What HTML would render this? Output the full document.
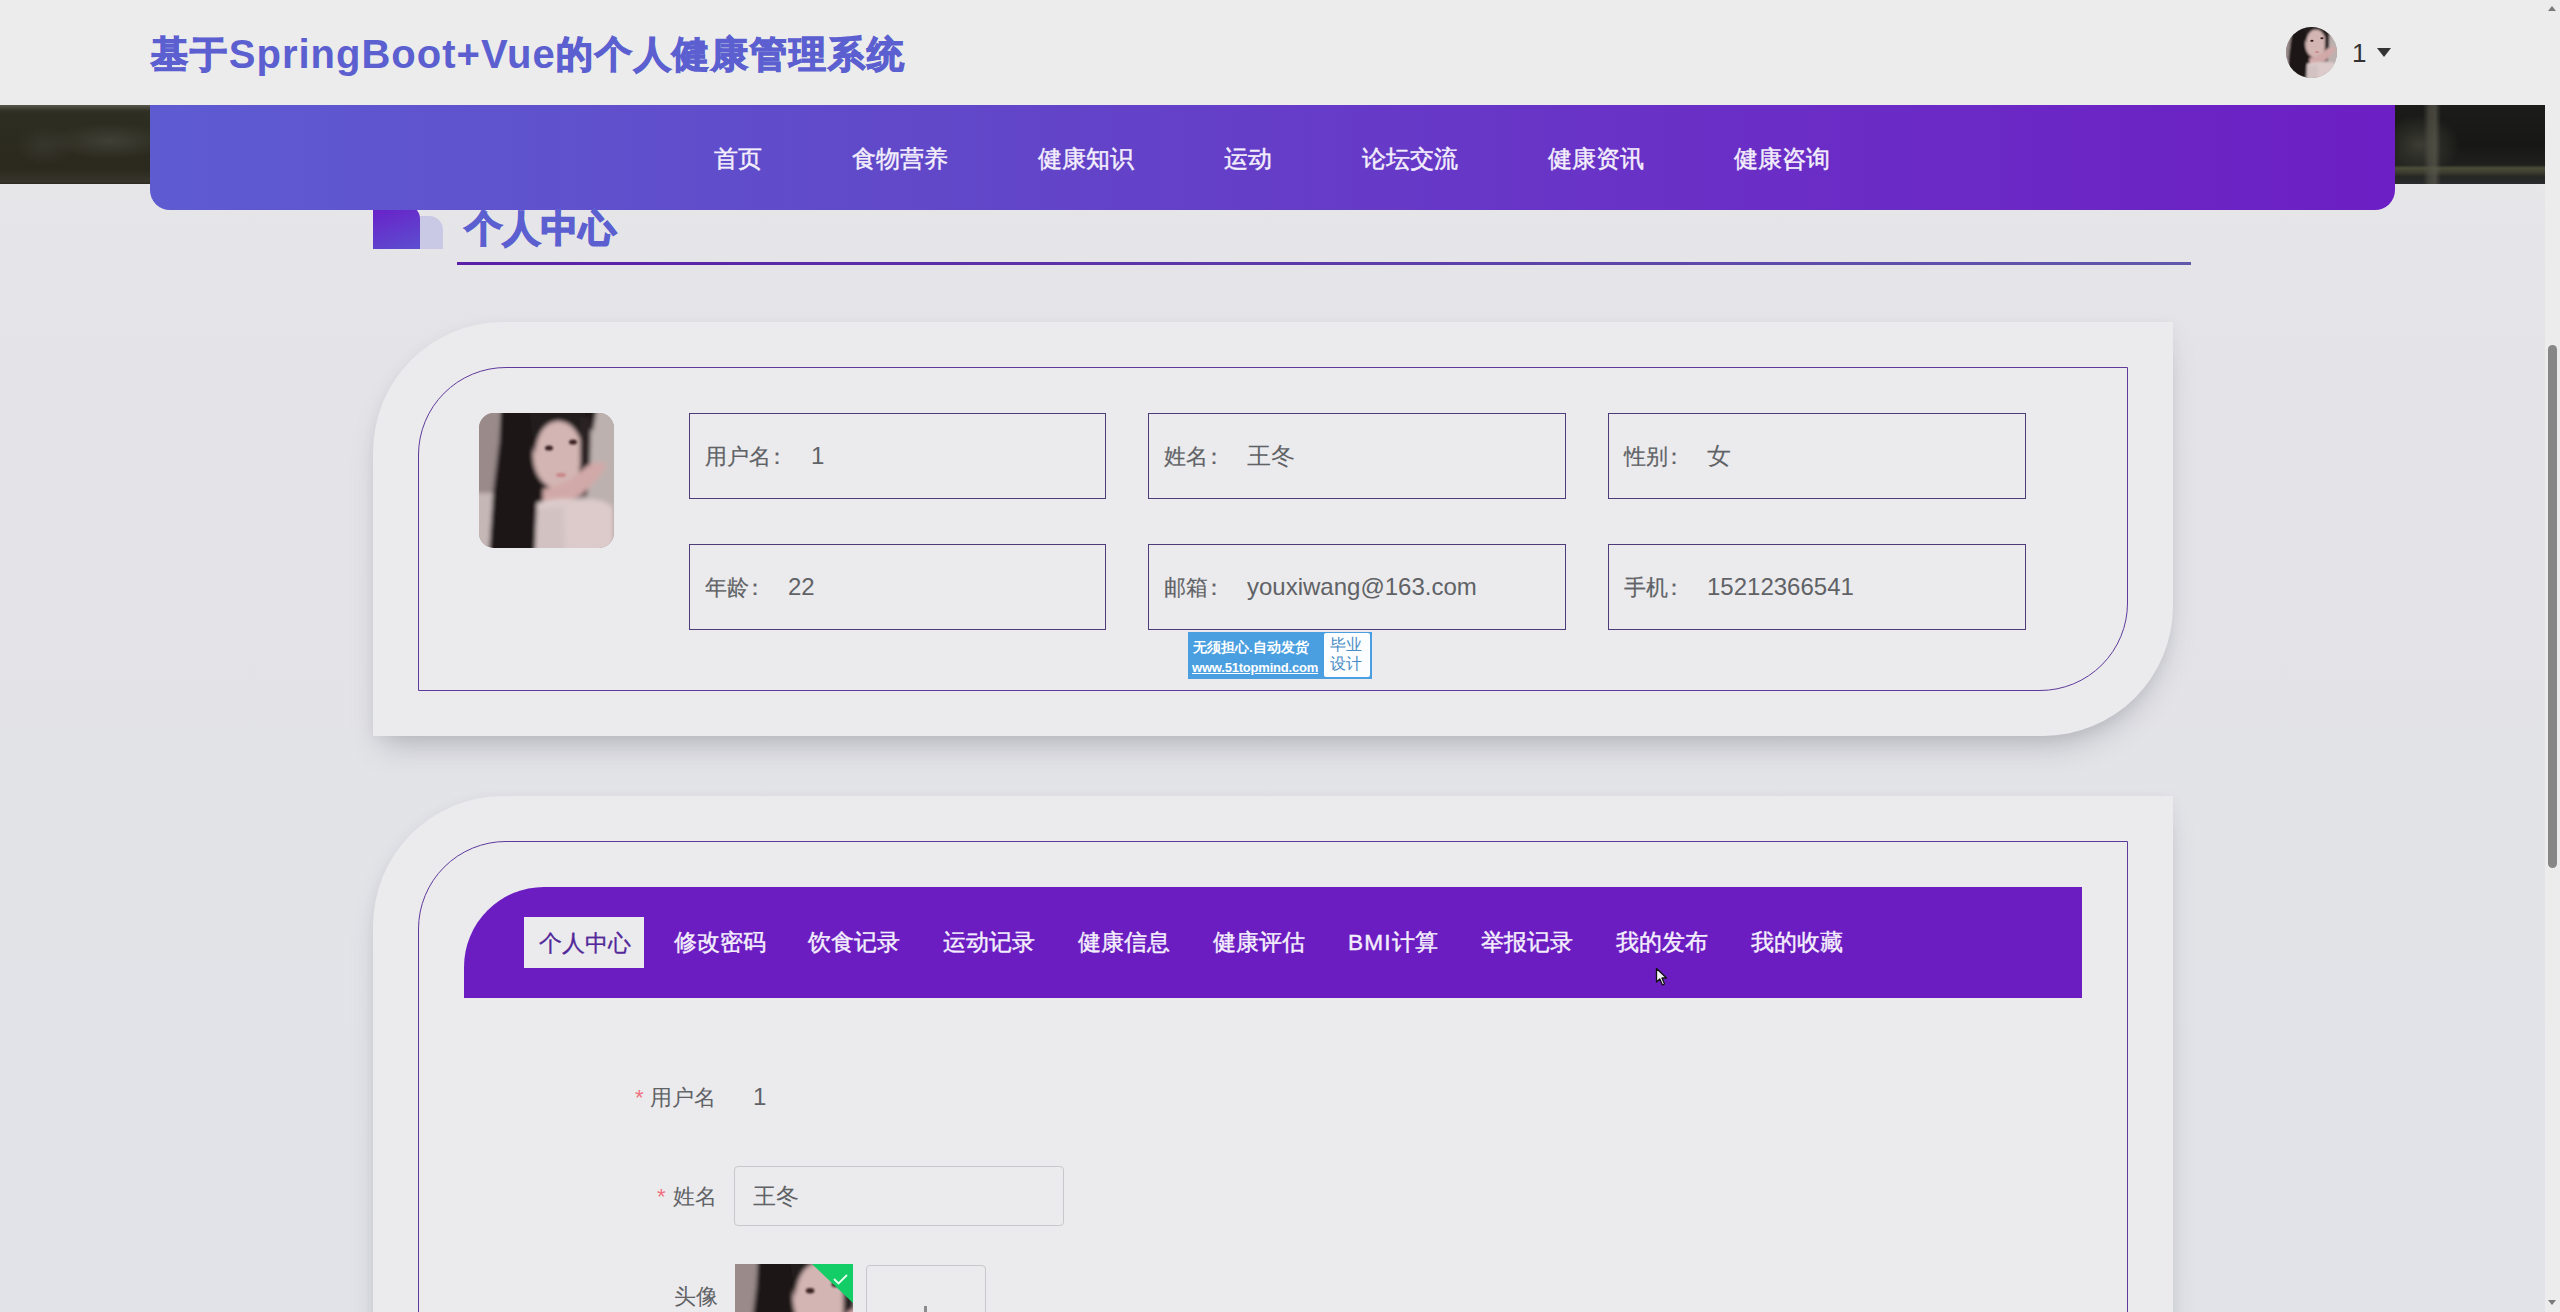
<!DOCTYPE html>
<html><head><meta charset="utf-8">
<style>
*{margin:0;padding:0;box-sizing:border-box}
html,body{width:2560px;height:1312px;overflow:hidden}
body{position:relative;font-family:"Liberation Sans",sans-serif;background:linear-gradient(180deg,#ececec 0,#ececec 105px,#e6e6e9 190px,#e3e3e8 400px,#e2e3e8 1312px);}
.abs{position:absolute}
#title .cj{font-size:37px;letter-spacing:1.9px;-webkit-text-stroke:1.3px #5b5fd0;vertical-align:1px}
#title .lt{font-size:40px;letter-spacing:1.0px}
#hdr{left:0;top:0;width:2545px;height:105px;background:#ececec}
#title{left:151px;top:28px;font-size:40px;font-weight:bold;color:#5b5fd0;white-space:nowrap;line-height:52px}
#banner{left:0;top:105px;width:2545px;height:79px;background:#2b2a20}
#bnl{left:0;top:105px;width:150px;height:79px;background:
 linear-gradient(180deg,rgba(120,120,110,.55) 0,rgba(60,60,50,.2) 6px,rgba(0,0,0,0) 10px),
 radial-gradient(ellipse 60px 18px at 110px 36px,rgba(70,70,62,.75),rgba(0,0,0,0)),
 radial-gradient(ellipse 30px 20px at 45px 40px,rgba(62,62,55,.6),rgba(0,0,0,0)),
 linear-gradient(180deg,#2f2e22 0,#2c2b1f 45%,#2b291e 80%,#37352b 97%,#2a2920 100%)}
#bnr{left:2395px;top:105px;width:150px;height:79px;background:
 linear-gradient(90deg,rgba(0,0,0,0) 28px,rgba(80,80,70,.7) 34px,rgba(90,90,78,.7) 40px,rgba(0,0,0,0) 46px),
 linear-gradient(180deg,rgba(0,0,0,0) 60px,rgba(85,88,62,.8) 63px,rgba(80,82,60,.6) 67px,rgba(0,0,0,0) 72px),
 radial-gradient(ellipse 40px 30px at 25px 40px,rgba(70,70,60,.8),rgba(0,0,0,0)),
 linear-gradient(180deg,#1c1c1a 0,#171715 50%,#222220 85%,#2a2b2c 100%)}
#nav{left:150px;top:105px;width:2245px;height:105px;border-radius:0 0 20px 20px;background:linear-gradient(90deg,#5e5bd1 0%,#6148c9 35%,#6a2fc6 70%,#6c1fc4 100%)}
.nv{position:absolute;top:142px;font-size:24px;color:#f3eefc;-webkit-text-stroke:0.45px #f3eefc;line-height:34px;white-space:nowrap}
#ico1{left:373px;top:205px;width:47px;height:44px;border-radius:0 14px 0 0;background:linear-gradient(160deg,#6a1ec8,#5c4fd0)}
#ico2{left:400px;top:216px;width:43px;height:33px;border-radius:0 14px 0 0;background:#c9c9e6;z-index:-0}
#stitle{left:465px;top:203px;font-size:37px;letter-spacing:1px;font-weight:bold;color:#5b5fd0;-webkit-text-stroke:1.8px #5b5fd0;line-height:52px;white-space:nowrap}
#sline{left:457px;top:262px;width:1734px;height:3px;background:linear-gradient(90deg,#5a1ea8,#5f58ab)}
.card{position:absolute;left:373px;width:1800px;background:#ebebed;border-radius:130px 0 130px 0;box-shadow:0 18px 30px -10px rgba(100,100,110,.36),0 2px 12px rgba(120,120,135,.08)}
.inner{position:absolute;left:418px;width:1710px;border:1px solid #5e3a9c;border-radius:88px 0 88px 0}
.box{position:absolute;width:418px;height:86px;border:1px solid #4d3b7a}
.cl{margin-left:-5px}
.lbl{position:absolute;top:28px;left:15px;font-size:22px;color:#606266;-webkit-text-stroke:0.2px #606266;line-height:30px;white-space:nowrap}
.val{position:absolute;top:27px;font-size:24px;color:#606266;line-height:30px;white-space:nowrap}
#tabs{left:464px;top:887px;width:1618px;height:111px;background:#6c1dc2;border-radius:80px 0 0 0}
.tb{position:absolute;top:929px;font-size:22.6px;color:#f4effc;-webkit-text-stroke:0.4px #f4effc;line-height:28px;white-space:nowrap}
#act{left:524px;top:917px;width:120px;height:51px;background:#ebebed}
.fl{position:absolute;font-size:22px;color:#606266;line-height:30px;white-space:nowrap}
.req{color:#f07080}
#sb{left:2545px;top:0;width:15px;height:1312px;background:#ececec}
</style></head><body>
<svg width="0" height="0" style="position:absolute">
<defs>
<filter id="bl" x="-20%" y="-20%" width="140%" height="140%"><feGaussianBlur stdDeviation="2.2"/></filter>
<filter id="bl2"><feGaussianBlur stdDeviation="0.8"/></filter>
<symbol id="ph" viewBox="0 0 135 135">
<rect width="135" height="135" fill="#a39494"/>
<g filter="url(#bl)">
<rect x="-5" y="-5" width="25" height="150" fill="#9a8a8a"/>
<rect x="108" y="-5" width="32" height="100" fill="#bdb1af"/>
<rect x="-5" y="80" width="22" height="60" fill="#c6b7b7"/>
<path d="M22,-5 L118,-5 L114,18 L106,10 L104,40 L102,82 L64,88 L58,140 L10,140 L14,80 L20,30 Z" fill="#1d1919"/>
<ellipse cx="79" cy="42" rx="25" ry="34" fill="#d3b5b3"/>
<path d="M56,40 Q60,4 88,8 Q102,12 104,34 L106,-5 L50,-5 Z" fill="#221c1c"/>
<path d="M101,4 L112,4 L111,50 L108,82 L99,84 L101,50 Z" fill="#2a2020"/>
<path d="M64,76 Q90,72 106,54 Q120,46 128,52 Q120,66 102,82 Q82,92 64,90 Z" fill="#d1a9a8"/>
<path d="M58,90 Q75,84 100,86 Q125,84 135,96 L135,140 L56,140 Z" fill="#dccbca"/>
<path d="M58,96 L84,94 L86,140 L58,140 Z" fill="#d3c2c2"/>
</g>
<g filter="url(#bl2)">
<ellipse cx="70" cy="35" rx="4" ry="2.6" fill="#3a2424"/>
<ellipse cx="94" cy="29" rx="4" ry="2.6" fill="#3a2424"/>
<ellipse cx="82" cy="62" rx="5" ry="2" fill="#c88486"/>
</g>
</symbol>
</defs></svg>
<div id="hdr" class="abs"></div>
<div id="title" class="abs"><span class="cj">基于</span><span class="lt">SpringBoot+Vue</span><span class="cj">的个人健康管理系统</span></div>
<div class="abs" style="left:2286px;top:27px;width:51px;height:51px;border-radius:50%;overflow:hidden"><svg width="51" height="51" viewBox="8 2 122 122"><use href="#ph" width="135" height="135"/></svg></div>
<div class="abs" style="left:2352px;top:36px;font-size:26px;color:#333;line-height:34px">1</div>
<div class="abs" style="left:2377px;top:48px;width:0;height:0;border-left:7.5px solid transparent;border-right:7.5px solid transparent;border-top:9px solid #333"></div>
<div id="banner" class="abs"></div><div id="bnl" class="abs"></div><div id="bnr" class="abs"></div>
<div id="ico2" class="abs"></div>
<div id="ico1" class="abs"></div>
<div id="nav" class="abs"></div>
<div class="nv" style="left:714px">首页</div>
<div class="nv" style="left:852px">食物营养</div>
<div class="nv" style="left:1038px">健康知识</div>
<div class="nv" style="left:1224px">运动</div>
<div class="nv" style="left:1362px">论坛交流</div>
<div class="nv" style="left:1548px">健康资讯</div>
<div class="nv" style="left:1734px">健康咨询</div>

<div id="stitle" class="abs">个人中心</div>
<div id="sline" class="abs"></div>

<div class="card" style="top:322px;height:414px"></div>
<div class="inner" style="top:367px;height:324px"></div>
<div class="abs" id="av" style="left:479px;top:413px;width:135px;height:135px;border-radius:15px;overflow:hidden"><svg width="135" height="135"><use href="#ph"/></svg></div>

<div class="box" style="left:689px;top:413px;width:417px"><span class="lbl">用户名<span class="cl">：</span></span><span class="val" style="left:121px">1</span></div>
<div class="box" style="left:1148px;top:413px"><span class="lbl">姓名<span class="cl">：</span></span><span class="val" style="left:98px">王冬</span></div>
<div class="box" style="left:1608px;top:413px"><span class="lbl">性别<span class="cl">：</span></span><span class="val" style="left:98px">女</span></div>
<div class="box" style="left:689px;top:544px;width:417px"><span class="lbl">年龄<span class="cl">：</span></span><span class="val" style="left:98px">22</span></div>
<div class="box" style="left:1148px;top:544px"><span class="lbl">邮箱<span class="cl">：</span></span><span class="val" style="left:98px">youxiwang@163.com</span></div>
<div class="box" style="left:1608px;top:544px"><span class="lbl">手机<span class="cl">：</span></span><span class="val" style="left:98px">15212366541</span></div>

<div class="abs" style="left:1188px;top:632px;width:184px;height:47px;background:#4a9fe0">
<div class="abs" style="left:5px;top:8px;font-size:13.5px;font-weight:bold;color:#fff;line-height:16px;white-space:nowrap">无须担心.自动发货</div>
<div class="abs" style="left:4px;top:28px;font-size:13px;font-weight:bold;color:#fff;line-height:16px;white-space:nowrap;text-decoration:underline;letter-spacing:-0.2px">www.51topmind.com</div>
<div class="abs" style="left:136px;top:1px;width:46px;height:44px;background:#fbfdff;border-radius:2px"></div>
<div class="abs" style="left:142px;top:3px;font-size:16px;color:#4a8cc4;line-height:19px;white-space:nowrap">毕业<br>设计</div>
</div>
<div class="card" style="top:796px;height:700px"></div>
<div class="inner" style="top:841px;height:700px"></div>
<div id="tabs" class="abs"></div>
<div id="act" class="abs"></div>
<div class="tb" style="left:539px;top:930px;color:#52289a;-webkit-text-stroke:0.3px #52289a">个人中心</div>
<div class="tb" style="left:674px">修改密码</div>
<div class="tb" style="left:808px">饮食记录</div>
<div class="tb" style="left:943px">运动记录</div>
<div class="tb" style="left:1078px">健康信息</div>
<div class="tb" style="left:1213px">健康评估</div>
<div class="tb" style="left:1348px"><span style="letter-spacing:1.2px">BMI</span>计算</div>
<div class="tb" style="left:1481px">举报记录</div>
<div class="tb" style="left:1616px">我的发布</div>
<div class="tb" style="left:1751px">我的收藏</div>

<div class="fl" style="left:635px;top:1083px"><span class="req">*</span> 用户名</div>
<div class="fl" style="left:753px;top:1082px;font-size:24px">1</div>
<div class="fl" style="left:657px;top:1182px"><span class="req">*</span> <span style="margin-left:1px">姓名</span></div>
<div class="abs" style="left:734px;top:1166px;width:330px;height:60px;border:1px solid #c8c8cc;border-radius:4px"></div>
<div class="fl" style="left:753px;top:1181px;font-size:23px">王冬</div>
<div class="fl" style="left:674px;top:1282px">头像</div>
<div class="abs" style="left:735px;top:1264px;width:118px;height:118px;overflow:hidden"><svg width="118" height="118" viewBox="0 10 110 110" preserveAspectRatio="xMidYMid slice"><use href="#ph" width="135" height="135"/></svg>
<div class="abs" style="left:0;top:0;width:118px;height:118px;background:#13ce66;clip-path:polygon(77px 0,118px 0,118px 39px)"></div>
<svg class="abs" style="left:98px;top:9px" width="15" height="13" viewBox="0 0 15 13"><path d="M1,6 L5.5,10.5 L14,2" stroke="#e8fff0" stroke-width="1.8" fill="none"/></svg></div>
<div class="abs" style="left:866px;top:1265px;width:120px;height:120px;border:1px solid #c8c8cc;border-radius:4px"></div><div class="abs" style="left:924px;top:1306px;width:3px;height:20px;background:#8c8c8c"></div>

<div id="sb" class="abs"></div>
<div class="abs" style="left:2548px;top:6px;width:0;height:0;border-left:4.5px solid transparent;border-right:4.5px solid transparent;border-bottom:5px solid #7a7a7a"></div>
<div class="abs" style="left:2548px;top:1300px;width:0;height:0;border-left:4.5px solid transparent;border-right:4.5px solid transparent;border-top:5px solid #7a7a7a"></div>
<div class="abs" style="left:2548px;top:345px;width:9px;height:523px;border-radius:4.5px;background:#878787"></div>
<svg class="abs" style="left:1655px;top:967px" width="14" height="20" viewBox="0 0 14 20"><path d="M1.5,1.5 L1.5,15 L4.8,12 L7.5,18 L9.5,17 L7,11 L11.5,11 Z" fill="#f4f0f8" stroke="#111" stroke-width="1.3" stroke-linejoin="round"/></svg>

</body></html>
